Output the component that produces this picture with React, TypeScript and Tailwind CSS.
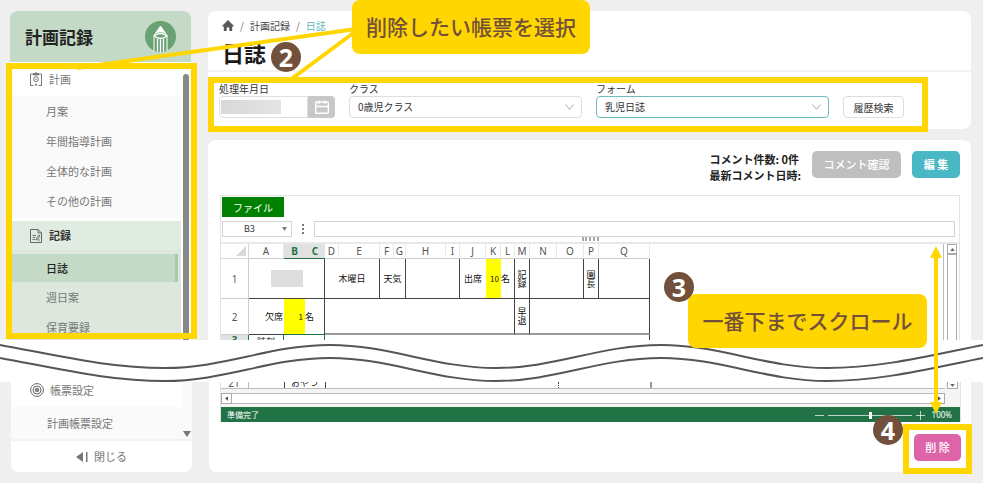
import React from "react";

const planItems = ["月案", "年間指導計画", "全体的な計画", "その他の計画"];
const recordItems = ["週日案", "保育要録"];

const columns = [
  { name: "A", width: 35 },
  { name: "B", width: 21, active: true },
  { name: "C", width: 20, active: true },
  { name: "D", width: 14 },
  { name: "E", width: 41 },
  { name: "F", width: 14 },
  { name: "G", width: 12 },
  { name: "H", width: 40 },
  { name: "I", width: 14 },
  { name: "J", width: 26 },
  { name: "K", width: 15 },
  { name: "L", width: 14 },
  { name: "M", width: 15 },
  { name: "N", width: 27 },
  { name: "O", width: 27 },
  { name: "P", width: 15 },
  { name: "Q", width: 51 },
];

function PencilLogo() {
  return (
    <svg viewBox="0 0 31 31" className="size-[31px]" aria-hidden="true">
      <circle cx="15.5" cy="15.5" r="15.5" fill="#68a272" />
      <path d="M15.5 5 L21 13 Q15.5 9.5 10 13 Z" fill="#fff" />
      <path d="M15.5 5 L22 14.5 V30 M15.5 5 L9 14.5 V30" stroke="#fff" fill="none" />
      <path d="M9 15 Q15.5 10 22 15 Q15.5 20 9 15 M12.5 18 V30.5 M15.5 18.5 V31 M18.5 18 V30.5" stroke="#fff" strokeWidth="1.3" fill="none" />
    </svg>
  );
}

function ClipboardIcon() {
  return (
    <svg viewBox="0 0 12 14" className="h-[14px] w-3 shrink-0" fill="none" stroke="#777" aria-hidden="true">
      <path d="M3.5 13.5 H0.5 V2 H3.5 M8.5 2 H11.5 V13.5 H8.5" />
      <path d="M3.5 1.5 H5 L6 0.5 L7 1.5 H8.5 V3 H3.5 Z" fill="#777" />
      <circle cx="6" cy="7.2" r="2.4" />
      <path d="M5 7.2 L5.8 8 L7.2 6.4" strokeWidth="0.8" />
      <path d="M4.5 13.5 L6 11 L7.5 13.5 Z" fill="#777" stroke="none" />
    </svg>
  );
}

function NoteIcon() {
  return (
    <svg viewBox="0 0 12 14" className="h-[14px] w-3 shrink-0" fill="none" stroke="#666" aria-hidden="true">
      <path d="M0.5 0.5 H8 L11.5 4 V13.5 H0.5 Z" />
      <path d="M8 0.5 V4 H11.5" />
      <path d="M2.5 6.5 H6 M2.5 8.5 H5 M2.5 10.5 H5 M6 11 L6.5 9 L9 6 L10 7 L7.5 10.5 Z M8 11 H10" strokeWidth="0.9" />
    </svg>
  );
}

function TargetIcon() {
  return (
    <svg viewBox="0 0 14 14" className="size-[14px] shrink-0" fill="none" stroke="#666" aria-hidden="true">
      <circle cx="7" cy="7" r="6.4" />
      <circle cx="7" cy="7" r="4" />
      <circle cx="7" cy="7" r="1.8" />
      <circle cx="7" cy="7" r="0.6" fill="#666" />
    </svg>
  );
}

function HomeIcon() {
  return (
    <svg viewBox="0 0 12 11" className="h-[11px] w-3" fill="#595959" aria-hidden="true">
      <path d="M6 0 L12 6 L11.3 6.6 H10.2 V11 H7.3 V7.5 H4.7 V11 H1.8 V6.6 H0.7 L0 6 Z" />
    </svg>
  );
}

function CalendarIcon() {
  return (
    <svg viewBox="0 0 14 14" className="size-[14px]" fill="none" stroke="#fff" strokeWidth="1.4" aria-hidden="true">
      <rect x="0.7" y="2" width="12.6" height="11.3" rx="1" />
      <path d="M1 6.5 H13 M4 0.5 V4 M10 0.5 V4" />
    </svg>
  );
}

function StepBadge({ n, className }: { n: number; className: string }) {
  return (
    <span
      className={`absolute z-30 flex size-[30px] items-center justify-center rounded-full bg-[#72503b] font-['Noto_Sans','Noto_Sans_CJK_JP',sans-serif] text-[25px] leading-none font-bold text-white ${className}`}
    >
      {n}
    </span>
  );
}

function Callout({ children, className }: { children: React.ReactNode; className: string }) {
  return (
    <div
      className={`absolute z-20 flex h-[54px] items-center justify-center rounded-lg bg-[#ffd600] pb-[2px] text-[21px] leading-none font-medium whitespace-nowrap text-[#72503b] ${className}`}
    >
      {children}
    </div>
  );
}

function Sidebar() {
  return (
    <aside className="w-[181px] shrink-0">
      <header className="flex h-[51px] items-center justify-between rounded-t-lg bg-[#c4dac7] px-[15px]">
        <h2 className="text-[17px] font-bold text-[#222]">計画記録</h2>
        <PencilLogo />
      </header>
      <nav className="relative flex bg-white text-[11px] text-[#777]">
        <div className="min-w-0 flex-1">
          <div className="flex h-[34px] items-center gap-[7px] pl-5">
            <ClipboardIcon />
            計画
          </div>
          <ul className="mb-[3px] bg-[#fafafa] pb-[2px]">
            {planItems.map((item) => (
              <li key={item}>
                <a href="#" className="flex h-[30px] items-center pl-9">{item}</a>
              </li>
            ))}
          </ul>
          <div className="flex h-[29px] items-center gap-[7px] bg-[#e0ebe1] pl-5 font-bold text-[#333]">
            <NoteIcon />
            記録
          </div>
          <ul className="bg-[#dde7de] pt-1 pb-4">
            <li>
              <a href="#" aria-current="page" className="mr-[3px] flex h-7 items-center border-r-[3px] border-[#a2cdab] bg-[#c4dac7] pl-9 font-medium text-[#222]">
                日誌
              </a>
            </li>
            {recordItems.map((item) => (
              <li key={item}>
                <a href="#" className="flex h-[30px] items-center pl-9">{item}</a>
              </li>
            ))}
          </ul>
        </div>
        <div className="flex w-[10px] flex-col items-center bg-white pt-3">
          <div className="w-[6px] flex-1 rounded-t-full bg-[#888]" />
        </div>
        <div className="pointer-events-none absolute top-px -right-[6px] -left-1 z-10 h-[276px] border-[6px] border-[#ffd600]" />
      </nav>
    </aside>
  );
}

function SelectField({ id, label, value, active }: { id: string; label: string; value: string; active?: boolean }) {
  return (
    <div className="min-w-0 flex-1">
      <label htmlFor={id} className="block h-[14px] leading-[14px]">{label}</label>
      <div className="relative">
        <select
          id={id}
          className={`block h-[22px] w-full appearance-none rounded border bg-white px-2 leading-none ${active ? "border-[#6dbcc0]" : "border-[#dedede]"}`}
        >
          <option>{value}</option>
        </select>
        <svg viewBox="0 0 9 6" className="pointer-events-none absolute top-2 right-2 h-[6px] w-[9px]" fill="none" stroke="#aaa" aria-hidden="true">
          <path d="M0.5 0.5 L4.5 5.3 L8.5 0.5" />
        </svg>
      </div>
    </div>
  );
}

function FilterCard() {
  return (
    <section className="rounded-lg bg-white">
      <div className="h-[61px] border-b-2 border-[#f2f2f2] pt-[7px] pl-[14px]">
        <nav className="flex h-[14px] items-center gap-[6px] text-[10px] text-[#444]">
          <a href="#" aria-label="ホーム"><HomeIcon /></a>
          <span className="text-[#777]">/</span>
          <a href="#">計画記録</a>
          <span className="text-[#777]">/</span>
          <span className="text-[#62b8bd]">日誌</span>
        </nav>
        <h1 className="mt-[9px] text-[22px] leading-[22px] font-bold text-[#1a1a1a]">日誌</h1>
      </div>
      <form className="relative flex h-[57px] items-start gap-[14px] pt-[10px] pr-[67px] pl-[11px] text-[10px] text-[#333]">
        <div className="w-[116px] shrink-0">
          <label htmlFor="date" className="block h-[14px] leading-[14px]">処理年月日</label>
          <div className="relative flex h-[22px]">
            <input id="date" type="text" className="min-w-0 flex-1 rounded-l border border-[#dedede] bg-white px-2" />
            <span className="pointer-events-none absolute top-1 left-[2px] h-[14px] w-[60px] bg-linear-to-r from-[#d8d8d8] to-[#e4e4e4]" />
            <button type="button" aria-label="カレンダー" className="flex w-[27px] items-center justify-center rounded-r bg-[#c8c8c8]">
              <CalendarIcon />
            </button>
          </div>
        </div>
        <SelectField id="class" label="クラス" value="0歳児クラス" />
        <SelectField id="form" label="フォーム" value="乳児日誌" active />
        <button type="button" className="mt-[14px] h-[22px] w-[61px] shrink-0 rounded border border-[#dedede] bg-white">
          履歴検索
        </button>
        <div className="pointer-events-none absolute top-[5px] right-[43px] left-0 z-10 h-[55px] border-[6px] border-[#ffd600]" />
      </form>
    </section>
  );
}

const cell = "border-r border-b border-[#444] p-0 text-center";

function Vertical({ text }: { text: string }) {
  return (
    <span className="inline-block w-[9px] leading-[9px] break-all align-middle">{text}</span>
  );
}

function SheetTable() {
  return (
    <table className="w-[429px] table-fixed border-separate border-spacing-0 text-[9px] leading-none text-[#111]">
      <colgroup>
        <col className="w-[28px]" />
        {columns.map((c) => (
          <col key={c.name} style={{ width: c.width }} />
        ))}
      </colgroup>
      <thead>
        <tr className="h-[15px] font-['Noto_Sans',sans-serif] text-[10px]">
          <th className="border-r border-b border-[#d6d6d6] p-0">
            <svg viewBox="0 0 10 10" className="mr-[2px] ml-auto size-[10px]" aria-hidden="true">
              <path d="M10 0 V10 H0 Z" fill="#d9d9d9" />
            </svg>
          </th>
          {columns.map((c) => (
            <th
              key={c.name}
              className={
                c.active
                  ? "border-b border-[#217346] bg-[#e1e1e1] p-0 font-bold text-[#217346]"
                  : "border-r border-b border-r-[#e8e8e8] border-b-[#ccc] p-0 font-normal text-[#555]"
              }
            >
              {c.name}
            </th>
          ))}
        </tr>
      </thead>
      <tbody>
        <tr className="h-10">
          <th className="border-r border-b border-[#ccc] p-0 font-['Noto_Sans',sans-serif] text-[10px] font-normal text-[#555]">1</th>
          <td className={cell} colSpan={3}>
            <span className="inline-block h-[17px] w-8 bg-[#dedede] align-middle" />
          </td>
          <td className={cell} colSpan={2}>木曜日</td>
          <td className={cell} colSpan={2}>天気</td>
          <td className={cell} colSpan={2} />
          <td className="border-b border-[#444] p-0 text-center">出席</td>
          <td className="border-b border-[#444] bg-[#ffff00] p-0 pr-[2px] text-right text-[8px]">10</td>
          <td className="border-r border-b border-[#444] p-0 whitespace-nowrap">名</td>
          <td className={cell}><Vertical text="記録" /></td>
          <td className={cell} colSpan={2} />
          <td className={cell}><Vertical text="園長" /></td>
          <td className={cell} />
        </tr>
        <tr className="h-9">
          <th className="border-r border-b border-[#ccc] p-0 font-['Noto_Sans',sans-serif] text-[10px] font-normal text-[#555]">2</th>
          <td className="border-b border-[#444] p-0 pr-px text-right">欠席</td>
          <td className="border-b border-[#217346] bg-[#ffff00] p-0 pr-[2px] text-right text-[8px]">1</td>
          <td className="border-r border-b border-r-[#444] border-b-[#217346] p-0">名</td>
          <td className="border-r border-b-2 border-r-[#444] border-b-[#999] p-0" colSpan={9} />
          <td className="border-r border-b-2 border-r-[#444] border-b-[#999] p-0 text-center"><Vertical text="早退" /></td>
          <td className="border-r border-b-2 border-r-[#444] border-b-[#999] p-0" colSpan={4} />
        </tr>
        <tr className="h-9">
          <th className="border-r border-[#217346] bg-[#e1e1e1] p-0 align-top font-['Noto_Sans',sans-serif] text-[10px] text-[#217346]">3</th>
          <td className="border-r border-[#217346] p-0 pt-[2px] text-center align-top">時刻</td>
          <td className="border-r border-[#217346] p-0" colSpan={2} />
          <td className="border-r border-[#444] p-0" colSpan={14} />
        </tr>
      </tbody>
    </table>
  );
}

function SheetCard() {
  return (
    <section className="mt-[11px] rounded-t-lg bg-white pt-[11px] pr-[11px] pl-3">
      <div className="flex items-start justify-end gap-[11px] text-[11px]">
        <p className="leading-4 font-bold text-[#222]">
          コメント件数: 0件
          <br />
          最新コメント日時:
        </p>
        <button type="button" className="h-[27px] w-[89px] rounded-[5px] bg-[#bfbfbf] font-medium text-white">コメント確認</button>
        <button type="button" className="h-[27px] w-12 rounded-[5px] bg-[#4ab8c4] font-bold text-white">編 集</button>
      </div>
      <div className="mt-3 border border-[#e4e4e4] pt-px">
        <div className="pr-1 pl-px">
          <button type="button" className="block h-5 w-[62px] bg-[#008000] text-[10px] text-white">ファイル</button>
          <div className="mt-1 flex h-4 items-stretch">
            <div className="flex w-[70px] items-center justify-end gap-[27px] border border-[#d4d4d4] pr-1 font-['Noto_Sans',sans-serif] text-[9px] text-[#333]">
              B3
              <svg viewBox="0 0 6 5" className="h-1 w-[5px]" aria-hidden="true"><path d="M0 0 H6 L3 5 Z" fill="#777" /></svg>
            </div>
            <div className="flex w-[22px] flex-col items-center justify-center gap-[2px]">
              <i className="size-[2px] bg-[#777]" />
              <i className="size-[2px] bg-[#777]" />
              <i className="size-[2px] bg-[#777]" />
            </div>
            <input aria-label="数式" className="min-w-0 flex-1 border border-[#d4d4d4] bg-white" />
          </div>
        </div>
        <div className="mx-auto mb-px h-[4px] w-[17px] border-y-2 border-dotted border-[#aaa]" />
        <div className="flex border-t-2 border-[#e8e8e8]">
          <div className="min-w-0 flex-1">
            <SheetTable />
          </div>
          <div className="mr-[2px] flex w-[14px] flex-col border-l border-[#bbb] pl-[3px]">
            <div className="flex h-[10px] items-center justify-center border border-[#aaa]">
              <svg viewBox="0 0 6 4" className="h-[3px] w-[5px]" aria-hidden="true"><path d="M0 4 H6 L3 0 Z" fill="#666" /></svg>
            </div>
            <div className="flex-1 border border-[#aaa]" />
          </div>
        </div>
      </div>
    </section>
  );
}

function WaveBreak() {
  return (
    <div className="h-[42px] bg-white">
      <svg viewBox="0 0 983 42" preserveAspectRatio="none" className="h-full w-full" fill="none" stroke="#555" strokeWidth="2" aria-hidden="true">
        <path d="M0 5 C60 16 110 28 165 28 C225 28 270 5 330 5 C390 5 435 28 496 28 C556 28 600 5 661 5 C721 5 766 28 827 28 C882 28 932 15 983 5" />
        <path d="M0 18 C60 29 110 41 165 41 C225 41 270 18 330 18 C390 18 435 41 496 41 C556 41 600 18 661 18 C721 18 766 41 827 41 C882 41 932 28 983 18" />
      </svg>
    </div>
  );
}

function SidebarBottom() {
  return (
    <aside className="flex w-[181px] shrink-0 flex-col rounded-b-lg bg-white text-[11px] text-[#777]">
      <div className="flex">
        <div className="min-w-0 flex-1">
          <div className="flex h-[25px] items-start gap-[6px] pt-px pl-[19px]">
            <TargetIcon />
            <span className="leading-[14px]">帳票設定</span>
          </div>
          <a href="#" className="flex h-8 items-center bg-[#fafafa] pl-9">計画帳票設定</a>
        </div>
        <div className="flex w-[10px] items-end justify-center bg-[#fafafa] pb-[2px]">
          <svg viewBox="0 0 8 6" className="h-[6px] w-2" aria-hidden="true"><path d="M0 0 H8 L4 6 Z" fill="#777" /></svg>
        </div>
      </div>
      <button type="button" className="flex h-[33px] items-center justify-center gap-[6px] border-t-2 border-[#f2f2f2]">
        <svg viewBox="0 0 12 10" className="h-[10px] w-3" fill="#777" aria-hidden="true">
          <path d="M7 0 V10 L0 5 Z M10 0 H11.5 V10 H10 Z" />
        </svg>
        閉じる
      </button>
    </aside>
  );
}

function SheetBottom() {
  return (
    <section className="min-w-0 flex-1 rounded-b-lg bg-white pr-[10px] pl-[11px]">
      <div className="border-x border-[#e4e4e4] bg-[#f5f5f5]">
        <div className="flex h-[7px]">
          <table className="block h-[7px] min-w-0 flex-1 table-fixed overflow-hidden border-b border-[#bbb] bg-white text-[9px] leading-[9px] text-[#222]">
            <tbody>
              <tr className="h-[6px]">
                <th className="w-[27px] border-r border-[#bbb] p-0 font-['Noto_Sans',sans-serif] text-[10px] font-normal text-[#555]">
                  <span className="-mt-1 block h-[10px] w-[26px] leading-[10px]">21</span>
                </th>
                <td className="w-9 border-r border-[#444] p-0"><span className="block w-[35px]" /></td>
                <td className="border-r border-[#444] p-0 text-center"><span className="-mt-1 block h-[10px] w-10 leading-[10px]">おやつ</span></td>
                <td className="border-r border-dotted border-[#444] p-0"><span className="block w-[232px]" /></td>
                <td className="border-r-2 border-[#999] p-0"><span className="block w-[91px]" /></td>
              </tr>
            </tbody>
          </table>
          <div className="mr-[2px] ml-[2px] flex w-[11px] items-center justify-center border border-t-0 border-[#aaa] bg-white">
            <svg viewBox="0 0 6 4" className="h-[3px] w-[5px]" aria-hidden="true"><path d="M0 0 H6 L3 4 Z" fill="#666" /></svg>
          </div>
        </div>
        <div className="mt-1 mr-[15px] flex h-[11px] bg-white">
          <div className="flex w-[11px] items-center justify-center border border-[#aaa]">
            <svg viewBox="0 0 4 6" className="h-[5px] w-[3px]" aria-hidden="true"><path d="M4 0 V6 L0 3 Z" fill="#555" /></svg>
          </div>
          <div className="flex-1 border-y border-[#bbb]" />
          <div className="flex w-[11px] items-center justify-center border border-[#aaa]">
            <svg viewBox="0 0 4 6" className="h-[5px] w-[3px]" aria-hidden="true"><path d="M0 0 V6 L4 3 Z" fill="#555" /></svg>
          </div>
        </div>
        <div className="mt-[3px] flex h-[15px] items-center bg-[#217346] pr-2 pl-[6px] text-[8px] text-white">
          <span className="flex-1">準備完了</span>
          <svg viewBox="0 0 110 10" className="mr-[7px] h-[10px] w-[110px]" stroke="#fff" fill="none" aria-hidden="true">
            <path d="M0 5.5 H9 M101 5.5 H110 M105.5 1 V10" opacity="0.7" />
            <path d="M13 5.5 H97" opacity="0.7" />
            <path d="M55.5 2 V9" strokeWidth="3" />
          </svg>
          <span className="font-['Noto_Sans',sans-serif]">100%</span>
        </div>
      </div>
      <div className="flex h-[50px] items-start justify-end pt-3">
        <div className="relative">
          <button type="button" className="block h-[27px] w-[47px] rounded-[5px] bg-[#dd64a9] text-[11px] font-medium text-white">削 除</button>
          <div className="pointer-events-none absolute -inset-x-[11px] -top-[10px] z-10 h-[50px] border-[6px] border-[#ffd600]" />
          <StepBadge n={4} className="-top-[19px] -left-[41px]" />
        </div>
      </div>
    </section>
  );
}

export default function App() {
  return (
    <div className="relative overflow-hidden bg-[#efefef] font-['Noto_Sans_CJK_JP',sans-serif]">
      <div className="flex h-[340px] gap-[17px] overflow-hidden pt-[11px] pr-3 pl-[10px]">
        <Sidebar />
        <main className="min-w-0 flex-1">
          <FilterCard />
          <SheetCard />
        </main>
      </div>
      <WaveBreak />
      <div className="flex gap-[17px] pr-3 pb-[11px] pl-[11px]">
        <SidebarBottom />
        <SheetBottom />
      </div>

      <svg className="pointer-events-none absolute top-0 left-0 z-10 h-20 w-[360px]" viewBox="0 0 360 80" stroke="#ffd600" strokeWidth="4" fill="none" aria-hidden="true">
        <path d="M77 68 L356 29 M290 80 L356 31" />
      </svg>
      <Callout className="top-0 left-[352px] w-[238px]">削除したい帳票を選択</Callout>
      <StepBadge n={2} className="top-[42px] left-[271px]" />

      <svg className="pointer-events-none absolute top-[246px] right-[41px] z-20 h-[168px] w-3" viewBox="0 0 12 168" fill="#ffd600" aria-hidden="true">
        <path d="M6 0 L12 12 H8 V156 H12 L6 168 L0 156 H4 V12 H0 Z" />
      </svg>
      <Callout className="top-[294px] right-[56px] w-[239px]">一番下までスクロール</Callout>
      <StepBadge n={3} className="top-[272px] right-[289px]" />
    </div>
  );
}
